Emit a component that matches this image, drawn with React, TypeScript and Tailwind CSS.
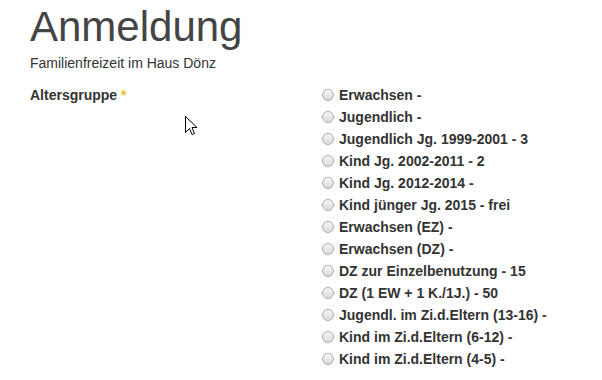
const options = [
  'Erwachsen -',
  'Jugendlich -',
  'Jugendlich Jg. 1999-2001 - 3',
  'Kind Jg. 2002-2011 - 2',
  'Kind Jg. 2012-2014 -',
  'Kind jünger Jg. 2015 - frei',
  'Erwachsen (EZ) -',
  'Erwachsen (DZ) -',
  'DZ zur Einzelbenutzung - 15',
  'DZ (1 EW + 1 K./1J.) - 50',
  'Jugendl. im Zi.d.Eltern (13-16) -',
  'Kind im Zi.d.Eltern (6-12) -',
  'Kind im Zi.d.Eltern (4-5) -',
]

function Radio() {
  return (
    <span className="mr-[5px] inline-block size-[12px] shrink-0 rounded-full border border-[#ababab] bg-gradient-to-b from-[#f6f6f6] to-[#dadada]" />
  )
}

export default function App() {
  return (
    <div className="relative h-[380px] w-[602px] overflow-hidden bg-white px-[30px] pt-[4px] font-['Liberation_Sans',Arial,sans-serif] text-[#333]">
      <h1 className="text-[42px] leading-[46px] text-[#444]">Anmeldung</h1>
      <p className="mt-[3px] text-[14px] leading-[20px] text-[#333]">Familienfreizeit im Haus Dönz</p>

      <div className="mt-[11px] flex">
        <div className="w-[292px] text-[14px] font-bold leading-[22px]">
          Altersgruppe <span className="text-[#f2c12e]">*</span>
        </div>
        <ul className="flex flex-col">
          {options.map(opt => (
            <li key={opt} className="flex items-center text-[14px] font-bold leading-[22px] text-[#333]">
              <Radio />
              <span>{opt}</span>
            </li>
          ))}
        </ul>
      </div>

      {/* mouse pointer captured in the screenshot */}
      <svg className="absolute left-[185px] top-[116px]" width="13" height="20" viewBox="0 0 13 20">
        <path
          d="M0.5 0.5 L0.5 16.5 L4.5 12.5 L7 18.5 L9.5 17.5 L7 11.5 L12 11.5 Z"
          fill="white"
          stroke="black"
          strokeWidth="1"
          strokeLinejoin="miter"
        />
      </svg>
    </div>
  )
}
